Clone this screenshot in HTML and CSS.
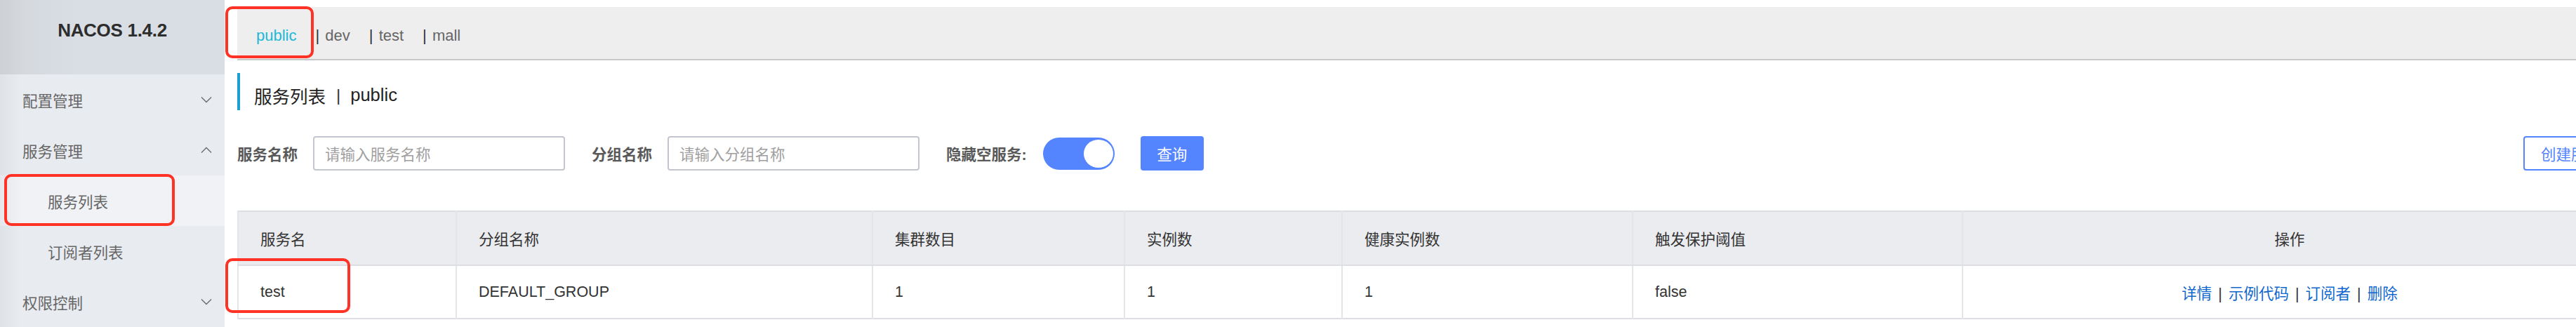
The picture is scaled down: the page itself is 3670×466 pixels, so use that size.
FILE: index.html
```html
<!DOCTYPE html>
<html lang="zh-CN">
<head>
<meta charset="utf-8">
<title>NACOS 1.4.2</title>
<link rel="stylesheet" href="styles.css">
</head>
<body>
<div class="app">
  <aside class="sidebar">
    <div class="logo">NACOS 1.4.2</div>
    <nav class="menu">
      <div class="menu-item">
        <span>配置管理</span>
        <svg class="chev" width="16" height="10" viewBox="0 0 16 10"><polyline points="1,1.5 8,8.5 15,1.5" fill="none" stroke="#6b6b6b" stroke-width="1.4"/></svg>
      </div>
      <div class="menu-item">
        <span>服务管理</span>
        <svg class="chev" width="16" height="10" viewBox="0 0 16 10"><polyline points="1,8.5 8,1.5 15,8.5" fill="none" stroke="#6b6b6b" stroke-width="1.4"/></svg>
      </div>
      <div class="menu-item sub active"><span>服务列表</span></div>
      <div class="menu-item sub"><span>订阅者列表</span></div>
      <div class="menu-item">
        <span>权限控制</span>
        <svg class="chev" width="16" height="10" viewBox="0 0 16 10"><polyline points="1,1.5 8,8.5 15,1.5" fill="none" stroke="#6b6b6b" stroke-width="1.4"/></svg>
      </div>
    </nav>
  </aside>

  <main class="main">
    <div class="ns-bar">
      <span class="ns current">public</span>
      <span class="ns"><span class="bar">|</span> dev</span>
      <span class="ns"><span class="bar">|</span> test</span>
      <span class="ns"><span class="bar">|</span> mall</span>
    </div>

    <div class="content">
      <h1 class="page-title"><span>服务列表</span><span class="sep">|</span><span>public</span></h1>

      <div class="search-row">
        <label class="label">服务名称</label>
        <div class="input"><span class="ph">请输入服务名称</span></div>
        <label class="label gap">分组名称</label>
        <div class="input"><span class="ph">请输入分组名称</span></div>
        <label class="label gap">隐藏空服务:</label>
        <div class="switch"><span class="knob"></span></div>
        <button class="btn primary">查询</button>
        <button class="btn outline">创建服务</button>
      </div>

      <table class="grid">
        <thead>
          <tr>
            <th class="c1">服务名</th>
            <th class="c2">分组名称</th>
            <th class="c3">集群数目</th>
            <th class="c4">实例数</th>
            <th class="c5">健康实例数</th>
            <th class="c6">触发保护阈值</th>
            <th class="c7 center">操作</th>
          </tr>
        </thead>
        <tbody>
          <tr>
            <td>test</td>
            <td>DEFAULT_GROUP</td>
            <td>1</td>
            <td>1</td>
            <td>1</td>
            <td>false</td>
            <td class="center ops"><a>详情</a><span class="pipe">|</span><a>示例代码</a><span class="pipe">|</span><a>订阅者</a><span class="pipe">|</span><a>删除</a></td>
          </tr>
        </tbody>
      </table>
    </div>
  </main>
</div>

<div class="mark mark-ns"></div>
<div class="mark mark-menu"></div>
<div class="mark mark-row"></div>
</body>
</html>
```

FILE: styles.css
```css
* { box-sizing: border-box; }

html, body {
  margin: 0;
  padding: 0;
}

body {
  position: relative;
  width: 3670px;
  height: 466px;
  overflow: hidden;
  background: #ffffff;
  font-family: "Liberation Sans", "Noto Sans CJK SC", Arial, sans-serif;
  font-size: 21.5px;
  color: #333333;
}

.app {
  display: flex;
  height: 466px;
}

/* ---------- sidebar ---------- */
.sidebar {
  flex: 0 0 320px;
  width: 320px;
  background: #e8ebf0;
  display: flex;
  flex-direction: column;
  position: relative;
}

.logo {
  height: 106px;
  background: linear-gradient(to right, #cdd1d6 0px, #d6dadf 40px, #d9dee4 120px, #d9dee4 100%);
  display: flex;
  align-items: center;
  justify-content: center;
  padding-bottom: 20px;
  font-weight: bold;
  font-size: 26px;
  color: #2d2d2d;
  letter-spacing: -0.3px;
}

.menu {
  display: flex;
  flex-direction: column;
  background: linear-gradient(to right, #dfe2e7 0px, #e8ebf0 30px, #e8ebf0 100%);
}

.menu-item {
  height: 72px;
  display: flex;
  align-items: center;
  justify-content: space-between;
  padding: 0 18px 0 32px;
  color: #666666;
  font-size: 21.5px;
}

.menu-item.sub {
  padding-left: 68px;
}

.menu-item.active {
  background: linear-gradient(to right, #e6e8ec 0px, #f0f2f5 30px, #f0f2f5 100%);
}

.chev {
  display: block;
}

/* ---------- main ---------- */
.main {
  flex: 1 1 auto;
  min-width: 0;
  padding-left: 18px;
  padding-top: 10px;
}

.ns-bar {
  height: 76px;
  background: #eeeeee;
  border-bottom: 2px solid #c8c8c8;
  display: flex;
  align-items: center;
  padding: 8px 0 0 27px;
  font-size: 22px;
  color: #666666;
  white-space: nowrap;
}

.ns {
  margin-right: 27px;
}

.ns.current {
  color: #21b8d8;
}

.ns .bar {
  color: #333333;
  margin-right: 2px;
}

.content {
  width: 3389px;
}

.page-title {
  margin: 18px 0 0 0;
  height: 53px;
  border-left: 4px solid #1aa0d2;
  padding: 10px 0 0 20px;
  display: flex;
  align-items: center;
  font-size: 25.5px;
  font-weight: normal;
  color: #222222;
}

.page-title .sep {
  margin: 0 14px 0 15px;
  font-size: 24px;
  color: #333333;
}

/* ---------- search ---------- */
.search-row {
  margin-top: 37px;
  height: 49px;
  display: flex;
  align-items: center;
}

.label {
  font-weight: bold;
  color: #595959;
  margin-right: 22px;
  white-space: nowrap;
}

.label.gap {
  margin-left: 38px;
}

.input {
  width: 359px;
  height: 49px;
  border: 2px solid #c4c6cf;
  border-radius: 4px;
  display: flex;
  align-items: center;
  padding-left: 15px;
}

.ph {
  color: #a0a0a0;
}

.switch {
  width: 102px;
  height: 46px;
  border-radius: 23px;
  background: #5584ff;
  position: relative;
  margin-left: 1px;
}

.knob {
  position: absolute;
  right: 2px;
  top: 3px;
  width: 42px;
  height: 40px;
  border-radius: 50%;
  background: #ffffff;
}

.btn {
  font-family: inherit;
  font-size: 21.5px;
  height: 49px;
  border-radius: 4px;
  padding: 0 23px;
  cursor: pointer;
}

.btn.primary {
  margin-left: 37px;
  width: 90px;
  background: #5584ff;
  border: none;
  color: #ffffff;
  padding: 0;
}

.btn.outline {
  margin-left: auto;
  width: 132px;
  background: #ffffff;
  border: 2px solid #5584ff;
  color: #5584ff;
  white-space: nowrap;
}

/* ---------- table ---------- */
.grid {
  margin-top: 57px;
  width: 3389px;
  border-collapse: collapse;
  table-layout: fixed;
  border: 2px solid #dcdee3;
}

.grid th,
.grid td {
  text-align: left;
  padding: 0 0 0 31px;
  font-weight: normal;
  color: #333333;
  border-left: 2px solid #e4e5e9;
  white-space: nowrap;
}

.grid th {
  height: 77px;
  background: #ebecf0;
  border-bottom: 2px solid #dcdee3;
}

.grid td {
  height: 76px;
}

.grid .center {
  text-align: center;
  padding-left: 0;
}

.c1 { width: 311px; }
.c2 { width: 593px; }
.c3 { width: 359px; }
.c4 { width: 310px; }
.c5 { width: 414px; }
.c6 { width: 470px; }
.c7 { width: 932px; }

.ops a {
  color: #1068cc;
}

.ops .pipe {
  color: #333333;
  margin: 0 9px;
}

/* ---------- annotation marks ---------- */
.mark {
  position: absolute;
  border: 4px solid #ff3226;
  border-radius: 10px;
}

.mark-ns {
  left: 321px;
  top: 9px;
  width: 126px;
  height: 74px;
}

.mark-menu {
  left: 6px;
  top: 248px;
  width: 243px;
  height: 74px;
}

.mark-row {
  left: 321px;
  top: 368px;
  width: 178px;
  height: 78px;
}
```
